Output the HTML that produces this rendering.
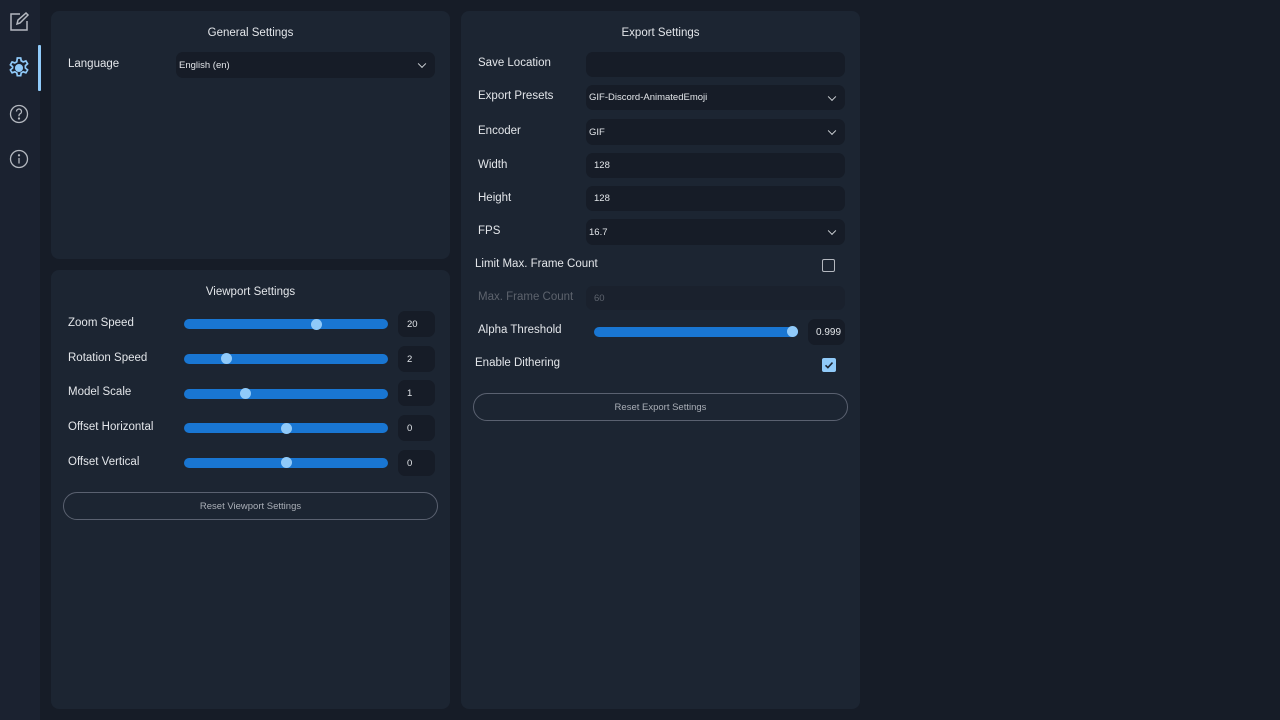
<!DOCTYPE html>
<html><head><style>
*{box-sizing:border-box;margin:0;padding:0}
body{width:1280px;height:720px;background:#161c27;font-family:"Liberation Sans",sans-serif;position:relative;overflow:hidden;color:#e3e6ea}
.a{position:absolute}
.side{left:0;top:0;width:40px;height:720px;background:#1b2230}
.panel{background:#1c2532;border-radius:8px}
.t{font-size:11.5px;color:#e3e6ea}
.h{font-size:11.5px;text-align:center;color:#e3e6ea}
.inp{background:#161c27;border-radius:7px;font-size:9.5px;color:#e3e6ea;padding-left:3px;display:flex;align-items:center}
.chev{position:absolute;right:10px;top:50%;width:6px;height:6px;border-right:1.4px solid #cfd3d8;border-bottom:1.4px solid #cfd3d8;transform:translateY(-70%) rotate(45deg)}
.track{height:10px;background:#1976d2;border-radius:5px}
.thumb{width:11px;height:11px;border-radius:50%;background:#90caf9}
.btn{border:1.5px solid #5a6170;border-radius:14px;font-size:9.5px;color:#a9aeb6;display:flex;align-items:center;justify-content:center}
</style></head><body>
<div class="a side"></div>
<div class="a" style="left:38px;top:45px;width:3px;height:46px;background:#90caf9;border-radius:1px"></div>
<svg class="a" style="left:8px;top:11px" width="22" height="22" viewBox="0 0 22 22" fill="none" stroke="#b4b8bf" stroke-width="1.5"><path d="M12 3H3v16h16v-9"/><path d="M9 13l1-4 8-7 2 2-8 8z"/></svg>
<svg class="a" style="left:7px;top:56px" width="24" height="24" viewBox="0 0 24 24" fill="none" stroke="#90caf9" stroke-width="1.7"><circle cx="12" cy="12" r="3.2" fill="#90caf9"/><path d="M10.3 2h3.4l.5 2.8 2 1.1 2.7-1 1.7 2.9-2.2 1.9v2.3l2.2 1.9-1.7 2.9-2.7-1-2 1.1-.5 2.8h-3.4l-.5-2.8-2-1.1-2.7 1-1.7-2.9 2.2-1.9V10.7L3.4 8.8l1.7-2.9 2.7 1 2-1.1z"/></svg>
<svg class="a" style="left:8px;top:103px" width="22" height="22" viewBox="0 0 22 22" fill="none" stroke="#b4b8bf" stroke-width="1.3"><circle cx="11" cy="11" r="8.5"/><path d="M8.5 8.5a2.5 2.5 0 1 1 3.5 2.3c-.7.4-1 .9-1 1.7v.8"/><circle cx="11" cy="15.5" r=".5" fill="#b4b8bf"/></svg>
<svg class="a" style="left:8px;top:148px" width="22" height="22" viewBox="0 0 22 22" fill="none" stroke="#b4b8bf" stroke-width="1.3"><circle cx="11" cy="11" r="8.5"/><path d="M11 10v5.5"/><circle cx="11" cy="7.3" r=".5" fill="#b4b8bf"/></svg>

<div class="a panel" style="left:51px;top:11px;width:399px;height:248px"></div>
<div class="a panel" style="left:51px;top:270px;width:399px;height:439px"></div>
<div class="a panel" style="left:461px;top:11px;width:399px;height:698px"></div>

<div class="a h" style="left:51px;top:27px;width:399px">General Settings</div>
<div class="a t" style="left:68px;top:58px">Language</div>
<div class="a inp" style="left:176px;top:52px;width:259px;height:26px">English (en)<span class="chev"></span></div>

<div class="a h" style="left:51px;top:286px;width:399px">Viewport Settings</div>
<div class="a t" style="left:68px;top:317px">Zoom Speed</div>
<div class="a t" style="left:68px;top:352px">Rotation Speed</div>
<div class="a t" style="left:68px;top:386px">Model Scale</div>
<div class="a t" style="left:68px;top:421px">Offset Horizontal</div>
<div class="a t" style="left:68px;top:456px">Offset Vertical</div>
<div class="a track" style="left:184px;top:319px;width:204px"></div><div class="a thumb" style="left:311px;top:319px"></div>
<div class="a track" style="left:184px;top:354px;width:204px"></div><div class="a thumb" style="left:221px;top:353px"></div>
<div class="a track" style="left:184px;top:389px;width:204px"></div><div class="a thumb" style="left:240px;top:388px"></div>
<div class="a track" style="left:184px;top:423px;width:204px"></div><div class="a thumb" style="left:281px;top:423px"></div>
<div class="a track" style="left:184px;top:458px;width:204px"></div><div class="a thumb" style="left:281px;top:457px"></div>
<div class="a inp" style="left:398px;top:311px;width:37px;height:26px;padding-left:9px">20</div>
<div class="a inp" style="left:398px;top:346px;width:37px;height:26px;padding-left:9px">2</div>
<div class="a inp" style="left:398px;top:380px;width:37px;height:26px;padding-left:9px">1</div>
<div class="a inp" style="left:398px;top:415px;width:37px;height:26px;padding-left:9px">0</div>
<div class="a inp" style="left:398px;top:450px;width:37px;height:26px;padding-left:9px">0</div>
<div class="a btn" style="left:63px;top:492px;width:375px;height:28px">Reset Viewport Settings</div>

<div class="a h" style="left:461px;top:27px;width:399px">Export Settings</div>
<div class="a t" style="left:478px;top:57px">Save Location</div>
<div class="a t" style="left:478px;top:90px">Export Presets</div>
<div class="a t" style="left:478px;top:125px">Encoder</div>
<div class="a t" style="left:478px;top:159px">Width</div>
<div class="a t" style="left:478px;top:192px">Height</div>
<div class="a t" style="left:478px;top:225px">FPS</div>
<div class="a inp" style="left:586px;top:52px;width:259px;height:25px"></div>
<div class="a inp" style="left:586px;top:85px;width:259px;height:25px">GIF-Discord-AnimatedEmoji<span class="chev"></span></div>
<div class="a inp" style="left:586px;top:119px;width:259px;height:26px">GIF<span class="chev"></span></div>
<div class="a inp" style="left:586px;top:153px;width:259px;height:25px;padding-left:8px">128</div>
<div class="a inp" style="left:586px;top:186px;width:259px;height:25px;padding-left:8px">128</div>
<div class="a inp" style="left:586px;top:219px;width:259px;height:26px">16.7<span class="chev"></span></div>
<div class="a t" style="left:475px;top:258px">Limit Max. Frame Count</div>
<div class="a" style="left:822px;top:259px;width:13px;height:13px;border:1.5px solid #b4b8bf;border-radius:2px"></div>
<div class="a t" style="left:478px;top:291px;color:#5d636d">Max. Frame Count</div>
<div class="a inp" style="left:586px;top:286px;width:259px;height:24px;padding-left:8px;background:#1a212d;color:#5d636d">60</div>
<div class="a t" style="left:478px;top:324px">Alpha Threshold</div>
<div class="a track" style="left:594px;top:327px;width:204px"></div><div class="a thumb" style="left:787px;top:326px"></div>
<div class="a inp" style="left:808px;top:319px;width:37px;height:26px;padding-left:8px;overflow:hidden;white-space:nowrap;font-size:10px"><span style="display:inline-block;width:26px;overflow:hidden">0.999</span></div>
<div class="a t" style="left:475px;top:357px">Enable Dithering</div>
<div class="a" style="left:822px;top:358px;width:14px;height:14px;background:#90caf9;border-radius:2px"></div>
<svg class="a" style="left:822px;top:358px" width="14" height="14" viewBox="0 0 14 14"><path d="M3.5 7.3l2.4 2.3 4.6-5" fill="none" stroke="#1c2532" stroke-width="1.6"/></svg>
<div class="a btn" style="left:473px;top:393px;width:375px;height:28px">Reset Export Settings</div>
</body></html>
